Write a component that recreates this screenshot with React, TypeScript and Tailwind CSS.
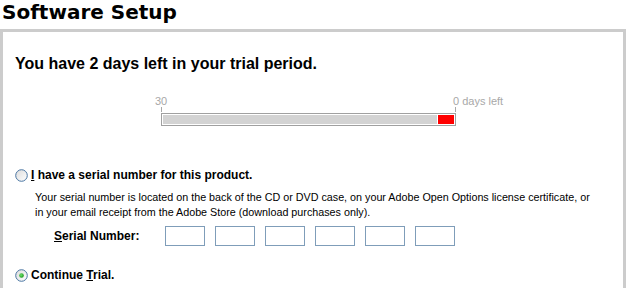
import React from 'react';

function Radio({ checked }: { checked?: boolean }) {
  return (
    <svg width="13" height="13" viewBox="0 0 13 13" className="shrink-0">
      <defs>
        <linearGradient id={checked ? 'rg-on' : 'rg-off'} x1="0" y1="0" x2="1" y2="1">
          <stop offset="0" stopColor="#dcdcdc" />
          <stop offset="1" stopColor="#ffffff" />
        </linearGradient>
        <radialGradient id="dot" cx="0.4" cy="0.4" r="0.6">
          <stop offset="0" stopColor="#6fe36f" />
          <stop offset="1" stopColor="#1f9a1f" />
        </radialGradient>
      </defs>
      <circle cx="6.5" cy="6.5" r="5.8" fill={`url(#${checked ? 'rg-on' : 'rg-off'})`} stroke="#4a76a3" strokeWidth="1" />
      {checked && <circle cx="6.5" cy="6.5" r="2.3" fill="url(#dot)" />}
    </svg>
  );
}

const sans = "font-['Liberation_Sans',Arial,sans-serif]";

export default function App() {
  const boxes = [0, 1, 2, 3, 4, 5];

  return (
    <div className={`w-[628px] h-[288px] overflow-hidden bg-white text-black ${sans}`}>
      <h1 className="pl-[2px] text-[20px] leading-[24px] font-bold font-['DejaVu_Sans',Verdana,sans-serif]">
        Software Setup
      </h1>

      <div className="mt-[5px] w-[626px] h-[300px] border-[3px] border-[#cccccc] pt-[22px] pl-[12px]">
        <p className="text-[16px] leading-[20px] font-bold">You have 2 days left in your trial period.</p>

        {/* trial bar */}
        <div className="mt-[21px] ml-[140px] flex text-[11px] leading-[12px] text-[#a8a8a8]">
          <span className="w-[298px]">30</span>
          <span>0 days left</span>
        </div>
        <div className="ml-[146px] w-[295px] flex justify-between">
          <div className="w-px h-[5px] bg-[#a8a8a8]" />
          <div className="w-px h-[5px] bg-[#a8a8a8]" />
        </div>
        <div className="mt-[1px] ml-[146px] w-[295px] h-[13px] border border-[#a0a0a0] p-[1px] flex gap-[1px] bg-white">
          <div className="flex-1 bg-[#d3d3d3]" />
          <div className="w-[16px] bg-[#ff0000]" />
        </div>

        {/* serial option */}
        <label className="mt-[42px] flex items-center gap-[3px] text-[12px] leading-[14px] font-bold">
          <Radio />
          <span>
            <span className="underline">I</span> have a serial number for this product.
          </span>
        </label>
        <p className="mt-[8px] pl-[20px] text-[10.75px] leading-[15px] whitespace-nowrap">
          Your serial number is located on the back of the CD or DVD case, on your Adobe Open Options license certificate, or
          <br />
          in your email receipt from the Adobe Store (download purchases only).
        </p>
        <div className="mt-[6px] flex items-center">
          <span className="ml-[39px] w-[111px] text-[12px] leading-[14px] font-bold">
            <span className="underline">S</span>erial Number:
          </span>
          <div className="flex gap-[10px]">
            {boxes.map((b) => (
              <input key={b} type="text" className="w-[40px] h-[20px] border border-[#7f9db9] bg-white outline-none" />
            ))}
          </div>
        </div>

        {/* trial option */}
        <label className="mt-[22px] flex items-center gap-[3px] text-[12px] leading-[14px] font-bold">
          <Radio checked />
          <span>
            Continue <span className="underline">T</span>rial.
          </span>
        </label>
      </div>
    </div>
  );
}
